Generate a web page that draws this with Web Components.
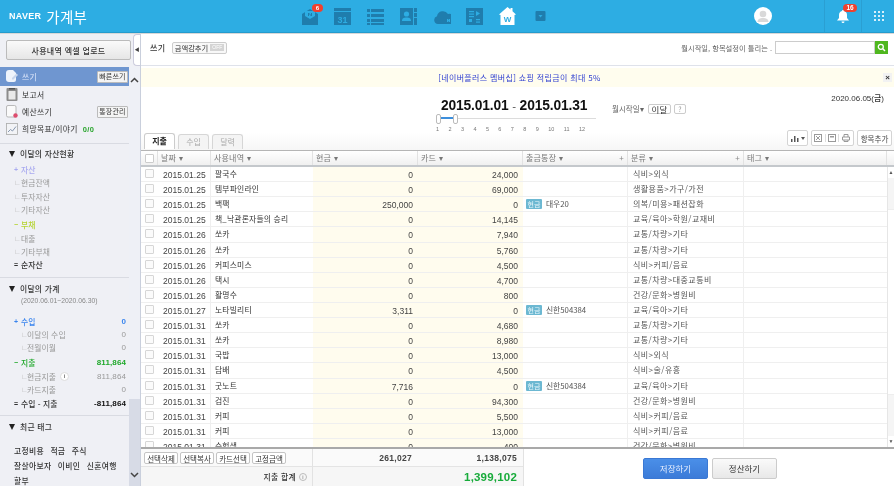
<!DOCTYPE html>
<html lang="ko">
<head>
<meta charset="utf-8">
<title>NAVER 가계부</title>
<style>
  html, body { margin: 0; height: 100%; overflow: hidden; background: #fff; }
  body {
    font-family: "Liberation Sans", "Noto Sans CJK KR", sans-serif;
    font-size: 9px;
    color: #444;
    filter: blur(.35px);
  }
</style>
</head>
<body>
<ledger-app></ledger-app>

<script>
const KR = `"Noto Sans CJK KR", "Liberation Sans", sans-serif`;

/**
 * Small helper, every element here renders once in connectedCallback
 */
class Base extends HTMLElement {
  constructor() {
    super();
    this.attachShadow({ mode: "open" });
  }
  connectedCallback() {
    this.shadowRoot.innerHTML = this.render();
  }
  attr(name, fallback = "") {
    return this.getAttribute(name) ?? fallback;
  }
}

/* ---------- top bar ---------- */
class TopIcon extends Base {
  render() {
    const c = "#1f7dad";
    const icons = {
      mail: `<path fill="${c}" d="M1 7l8-5 8 5v11H1z"/><path fill="#2dade3" d="M4 4h10v5l-5 3-5-3z"/><path fill="${c}" d="M7 6h1l2 2V6h1v3h-1L8 7v2H7z"/>`,
      cal: `<rect x="0" y="1" width="17" height="3" fill="${c}"/><rect x="0" y="5" width="17" height="13" fill="${c}"/><text x="8.5" y="16" font-size="9" font-weight="700" text-anchor="middle" fill="#2dade3" font-family="Liberation Sans">31</text>`,
      list: `<g fill="${c}"><rect x="0" y="2" width="3" height="3"/><rect x="4" y="2" width="13" height="3"/><rect x="0" y="7" width="3" height="3"/><rect x="4" y="7" width="13" height="3"/><rect x="0" y="12" width="3" height="3"/><rect x="4" y="12" width="13" height="3"/><rect x="0" y="16" width="3" height="2"/><rect x="4" y="16" width="13" height="2"/></g>`,
      contact: `<path fill="${c}" d="M0 1h13v17H0z"/><path fill="${c}" d="M14 1h3v4h-3zM14 6h3v4h-3zM14 11h3v7h-3z"/><circle cx="6.5" cy="7" r="2.6" fill="#2dade3"/><path fill="#2dade3" d="M2 14c0-3 2-3.500 4.500-3.500S11 11 11 14z"/>`,
      cloud: `<path fill="${c}" d="M4 17a4 4 0 0 1-1-7.800A6 6 0 0 1 14 7a5 5 0 0 1 3 10z" transform="translate(1 0)"/><path fill="#2dade3" d="M14 12h1l1 1.200V12h1v3h-1l-1-1.200V15h-1z"/>`,
      news: `<rect x="0" y="1" width="17" height="17" fill="${c}"/><g fill="#2dade3"><rect x="3" y="4" width="5" height="1.200"/><rect x="3" y="6.500" width="5" height="1.200"/><rect x="3" y="9" width="5" height="1.200"/><path d="M10 4l4 2.500-4 2.500z"/><rect x="3" y="12" width="3" height="3"/><rect x="10" y="12" width="4" height="1.200"/><rect x="10" y="14.500" width="4" height="1.200"/></g>`,
      home: `<path fill="#fff" d="M8.500 0l3 2.500V1h2v3.200L17 7.500 15.500 8v10h-14V8L0 7.500z"/><text x="8.500" y="15" font-size="8" font-weight="700" text-anchor="middle" fill="#2dade3" font-family="Liberation Sans">W</text>`,
      more: `<rect x="3.500" y="4" width="10" height="10" rx="1" fill="${c}"/><path fill="#2dade3" d="M6.500 8h4l-2 2.500z"/>`
    };
    return `<style>
      :host { display: block; flex: none; width: 18px; height: 19px; position: relative; }
      svg { display: block; }
      b {
        position: absolute; left: 11px; top: -3px; width: 11px; height: 8px; border-radius: 4px;
        background: #f0402f; color: #fff; font: 700 6px/8px "Liberation Sans", sans-serif; text-align: center;
      }
    </style>
    <svg width="18" height="19" viewBox="0 0 18 19">${icons[this.attr("name")]}</svg>
    ${this.hasAttribute("badge") ? `<b>${this.attr("badge")}</b>` : ""}`;
  }
}

class TopBar extends Base {
  render() {
    return `<style>
      :host {
        display: flex; align-items: center; height: 32px; background: #2dade3;
        border-bottom: 1px solid #259bcd; box-shadow: 0 1px 0 #d8d8d8; color: #fff; position: relative; z-index: 2;
      }
      .logo { width: 301px; flex: none; box-sizing: border-box; padding-left: 9px; display: flex; align-items: center; gap: 5px; }
      .naver { font: 900 9px "Liberation Sans", sans-serif; letter-spacing: .3px; }
      .title { font: 400 14.500px ${KR}; letter-spacing: .3px; }
      .apps { display: flex; gap: 15px; flex: none; }
      .avatar {
        width: 18px; height: 18px; flex: none; border-radius: 50%; background: #fff; margin-left: 204px; position: relative; overflow: hidden;
      }
      .avatar svg { display: block; }
      .cell { height: 32px; flex: none; border-left: 1px solid #2a9fd2; display: flex; align-items: center; justify-content: center; position: relative; box-sizing: border-box; }
      .bell { width: 37px; margin-left: 52px; }
      .bell i {
        position: absolute; left: 18px; top: 4px; width: 14px; height: 8px; border-radius: 4px; background: #f0402f;
        font: 700 6.500px/8px "Liberation Sans", sans-serif; text-align: center; font-style: normal;
      }
      .grid { width: 33px; }
      .dots { display: grid; grid-template-columns: repeat(3, 2.500px); gap: 1.500px; margin-left: 2px; }
      .dots u { height: 2.500px; background: #d8f0fb; }
    </style>
    <div class="logo"><span class="naver">NAVER</span><span class="title">가계부</span></div>
    <div class="apps">
      <top-icon name="mail" badge="6"></top-icon>
      <top-icon name="cal"></top-icon>
      <top-icon name="list"></top-icon>
      <top-icon name="contact"></top-icon>
      <top-icon name="cloud"></top-icon>
      <top-icon name="news"></top-icon>
      <top-icon name="home"></top-icon>
      <top-icon name="more"></top-icon>
    </div>
    <div class="avatar"><svg width="18" height="18" viewBox="0 0 18 18"><circle cx="9" cy="7" r="3.300" fill="#d9d9d9"/><path fill="#d9d9d9" d="M3.500 15c0-3 2.500-4 5.500-4s5.500 1 5.500 4z"/></svg></div>
    <div class="cell bell">
      <svg width="12" height="13" viewBox="0 0 12 13"><path fill="#fff" d="M6 0c.6 0 1 .4 1 1 2 .5 3 2 3 4v3l2 2.500H0L2 8V5c0-2 1-3.500 3-4 0-.6.4-1 1-1zM4.500 11.500h3a1.500 1.500 0 0 1-3 0z"/></svg>
      <i>16</i>
    </div>
    <div class="cell grid"><div class="dots">${"<u></u>".repeat(9)}</div></div>`;
  }
}

/* ---------- sidebar ---------- */
const NAV_ICONS = {
  write: `<path fill="#eef3fb" d="M0 3a3 3 0 0 1 3-3h4l3 3v7a2 2 0 0 1-2 2H3a3 3 0 0 1-3-3z"/><path fill="#c7d5ec" d="M6 8l4.500-4.500L12 5l-4.500 4.500H6z"/>`,
  report: `<rect x=".5" y="0" width="11" height="13" rx="1" fill="#8c8c8c"/><rect x="2.500" y="3" width="7" height="8.500" fill="#e9e9e9"/><rect x="3" y="0" width="6" height="1.500" fill="#555"/>`,
  budget: `<rect x=".5" y=".5" width="9.500" height="11.500" rx="1.500" fill="#fafafa" stroke="#aaa" stroke-width=".8"/><circle cx="9.500" cy="10.500" r="2.200" fill="#dd4d6e"/>`,
  goal: `<rect x=".5" y="1.500" width="11" height="11" fill="#f2f3f6" stroke="#aaa" stroke-width=".8"/><path d="M2 10l2.500-2.500 2 1.500L10 4.500" fill="none" stroke="#7c8da8" stroke-width=".9"/>`
};

class SideNav extends Base {
  render() {
    const active = this.hasAttribute("active");
    return `<style>
      :host {
        display: flex; flex: none; align-items: center; height: ${this.attr("h", "17")}px; padding: 0 1px 0 6px; gap: 4px;
        font: 400 7.800px ${KR}; letter-spacing: .3px; color: ${active ? "#dfe8fb" : "#333"};
        background: ${active ? "#6f96d0" : "transparent"};
      }
      svg { flex: none; }
      .txt { flex: 1; white-space: nowrap; }
      .tag {
        height: 10px; line-height: 9px; padding: 0 1.500px; border: 1px solid #bbb; border-radius: 1px; letter-spacing: .1px;
        font-size: 7px; color: #333; background: #f4f4f4; white-space: nowrap;
      }
      em { color: #2aa52d; font: 700 7.500px "Liberation Sans", sans-serif; margin-left: 5px; letter-spacing: .4px; font-style: normal; }
    </style>
    <svg width="12" height="13" viewBox="0 0 12 13">${NAV_ICONS[this.attr("icon")]}</svg>
    <span class="txt"><slot></slot>${this.hasAttribute("score") ? `<em>${this.attr("score")}</em>` : ""}</span>
    ${this.hasAttribute("tag") ? `<span class="tag">${this.attr("tag")}</span>` : ""}`;
  }
}

class SideTitle extends Base {
  render() {
    return `<style>
      :host {
        display: block; flex: none; height: 14px; padding-left: 9px;
        font: 500 7.800px/14px ${KR}; letter-spacing: .25px; color: #333; white-space: nowrap;
      }
      i { display: inline-block; width: 0; height: 0; border: 3.500px solid transparent; border-top: 6px solid #222; border-bottom: 0; margin-right: 5px; vertical-align: 0; }
    </style><i></i><slot></slot>`;
  }
}

class SideStat extends Base {
  render() {
    const kind = this.attr("kind", "sub");
    const deep = this.hasAttribute("deep");
    const mark = { plus: "+", minus: "−", eq: "=", sub: "∟" }[kind];
    const color = this.attr("color", kind === "sub" ? "#999" : "#333");
    const bold = kind !== "sub";
    return `<style>
      :host {
        display: flex; flex: none; align-items: center; height: 13.300px; padding: 0 3px 0 ${deep ? 21 : 14}px;
        font: ${bold ? 500 : 400} 7.800px ${KR}; letter-spacing: .1px; color: ${color}; white-space: nowrap;
      }
      .m { width: ${deep ? 6 : 7}px; flex: none; font: 700 7px "Liberation Sans", sans-serif; color: ${kind === "sub" ? "#bbb" : color}; }
      .l { flex: 1; display: flex; align-items: center; gap: 4px; }
      .v { font: ${bold ? 700 : 400} 8px "Liberation Sans", sans-serif; letter-spacing: .1px; color: ${kind === "eq" ? "#111" : color}; }
      .h { width: 9px; height: 9px; border-radius: 50%; border: 1px solid #ddd; box-sizing: border-box; font: 700 6px/7px "Liberation Sans", sans-serif; text-align: center; color: #777; background: #fff; }
    </style>
    <span class="m">${mark}</span>
    <span class="l"><slot></slot>${this.hasAttribute("help") ? `<span class="h">i</span>` : ""}</span>
    ${this.hasAttribute("value") ? `<span class="v">${this.attr("value")}</span>` : ""}`;
  }
}

class SideBar extends Base {
  render() {
    return `<style>
      :host { display: flex; flex-direction: column; width: 140px; flex: none; background: #eff0f5; position: relative; overflow: hidden; border-right: 1px solid #c9cfdc; box-sizing: content-box; }
      .upload { height: 34px; flex: none; box-sizing: border-box; padding: 7px 9px 0 6px; }
      .upload button {
        display: block; width: 125px; height: 20px; padding: 0; border: 1px solid #bbb; border-radius: 2px;
        background: linear-gradient(#fafafa, #e6e6e6); color: #333; font: 500 8px ${KR}; letter-spacing: .3px;
      }
      .fold {
        position: absolute; left: 133px; top: 1px; width: 7px; height: 32px; box-sizing: border-box; background: #fff;
        border: 1px solid #ccd; border-right: 0; border-radius: 4px 0 0 4px; font-size: 5px; line-height: 29px; color: #444; text-align: center;
      }
      .wrap { flex: 1; display: flex; min-height: 0; }
      .content { width: 129px; flex: none; display: flex; flex-direction: column; }
      .rail { width: 11px; flex: none; display: flex; flex-direction: column; background: #e9ecf4; justify-content: flex-start; }
      .rail div { height: 332px; flex: none; background: #eef0f6; text-align: center; }
      .rail span { flex: 1; background: #d7dbe6; display: flex; align-items: flex-end; justify-content: center; padding-bottom: 8px; }
      .rail svg { display: block; margin: 10px auto 0; }
      .rail span svg { margin: 0; }
      hr { border: 0; border-top: 1px solid #d9dbe2; margin: 0; flex: none; }
      .date { height: 10px; flex: none; padding-left: 21px; font: 400 6.800px/10px "Liberation Sans", sans-serif; color: #888; white-space: nowrap; }
      .tags { flex: none; padding: 10px 0 0 14px; font: 500 7.800px/14.600px ${KR}; letter-spacing: .3px; color: #333; word-spacing: 4px; white-space: nowrap; }
    </style>
    <div class="upload"><button>사용내역 엑셀 업로드</button></div>
    <div class="fold">◀</div>
    <div class="wrap">
      <div class="content">
        <side-nav active h="19" tag="빠른쓰기" icon="write">쓰기</side-nav>
        <side-nav h="17" icon="report">보고서</side-nav>
        <side-nav h="17" tag="통장관리" icon="budget">예산쓰기</side-nav>
        <side-nav h="17" score="0/0" icon="goal">희망목표/이야기</side-nav>
        <hr style="margin-top:6px">
        <side-title style="margin-top:3px">이달의 자산현황</side-title>
        <side-stat kind="plus" color="#a9aaf0" style="margin-top:2px">자산</side-stat>
        <side-stat>현금잔액</side-stat>
        <side-stat>투자자산</side-stat>
        <side-stat>기타자산</side-stat>
        <side-stat kind="minus" color="#b4d32f" style="margin-top:2px">부채</side-stat>
        <side-stat>대출</side-stat>
        <side-stat>기타부채</side-stat>
        <side-stat kind="eq">순자산</side-stat>
        <hr style="margin-top:6px">
        <side-title style="margin-top:4px">이달의 가계</side-title>
        <div class="date">(2020.06.01~2020.06.30)</div>
        <side-stat kind="plus" color="#3a85ee" value="0" style="margin-top:8px">수입</side-stat>
        <side-stat deep value="0">이달의 수입</side-stat>
        <side-stat deep value="0">전월이월</side-stat>
        <side-stat kind="minus" color="#1fa82a" value="811,864" style="margin-top:2px">지출</side-stat>
        <side-stat deep help value="811,864">현금지출</side-stat>
        <side-stat deep value="0">카드지출</side-stat>
        <side-stat kind="eq" value="-811,864" style="margin-top:1px">수입 - 지출</side-stat>
        <hr style="margin-top:5px">
        <side-title style="margin-top:4px">최근 태그</side-title>
        <div class="tags">고정비용 적금 주식<br>잘살아보자 이비인 신혼여행<br>할부</div>
      </div>
      <div class="rail">
        <div><svg width="9" height="6" viewBox="0 0 9 6"><path d="M1 5l3.500-3.500L8 5" fill="none" stroke="#444" stroke-width="1.500"/></svg></div>
        <span><svg width="9" height="6" viewBox="0 0 9 6"><path d="M1 1l3.500 3.500L8 1" fill="none" stroke="#444" stroke-width="1.500"/></svg></span>
      </div>
    </div>`;
  }
}

/* ---------- main top ---------- */
class ToolBar extends Base {
  render() {
    return `<style>
      :host {
        display: flex; flex: none; align-items: center; height: 33px; box-sizing: border-box; padding: 0 6px 3px 9px; border-bottom: 1px solid #dfe2ea;
        font: 400 7.300px ${KR}; color: #666;
      }
      b { font-weight: 500; color: #333; font-size: 8px; letter-spacing: .5px; margin-right: 6px; }
      .toggle {
        display: flex; align-items: center; gap: 2px; height: 12px; box-sizing: border-box; padding: 0 2px; border: 1px solid #ccc; border-radius: 2px;
        background: #f8f8f8; color: #333; font-size: 7.300px;
      }
      .toggle i { font: 400 5px/7px "Liberation Sans", sans-serif; background: #d4d4d4; color: #fff; padding: 0 2px; font-style: normal; }
      .hint { margin-left: auto; margin-right: 3px; }
      .search { width: 100px; height: 13px; box-sizing: border-box; border: 1px solid #ccc; background: #fff; }
      .go { width: 13px; height: 13px; background: #4fb71f; display: flex; align-items: center; justify-content: center; }
    </style>
    <b>쓰기</b>
    <span class="toggle">금액감추기<i>OFF</i></span>
    <span class="hint">월시작일, 항목설정이 틀리는 .</span>
    <div class="search"></div>
    <div class="go"><svg width="9" height="9" viewBox="0 0 9 9"><circle cx="3.800" cy="3.800" r="2.500" fill="none" stroke="#fff" stroke-width="1.300"/><path d="M5.800 5.800L8 8" stroke="#fff" stroke-width="1.500"/></svg></div>`;
  }
}

class NoticeBar extends Base {
  render() {
    return `<style>
      :host {
        display: block; flex: none; position: relative; margin-top: 2px; height: 19px; background: #fffdee; text-align: center;
        font: 400 8px/19px ${KR}; color: #2f3fd0; letter-spacing: .35px;
      }
      button { position: absolute; right: 2px; top: 5px; width: 9px; height: 9px; padding: 0; border: 0; background: #f2f2f2; color: #333; font: 700 8px/9px "Liberation Sans", sans-serif; }
      span { display: inline-block; transform: translateX(2px); }
    </style><span>[네이버플러스 멤버십] 쇼핑 적립금이 최대 5%</span><button>×</button>`;
  }
}

class MonthSlider extends Base {
  render() {
    const ticks = Array.from({ length: 12 }, (_, i) => `<span>${i + 1}</span>`).join("");
    return `<style>
      :host { display: block; position: relative; width: 160px; height: 16px; }
      .line { position: absolute; left: 2px; right: 0; top: 4px; height: 1px; background: #dcdcdc; }
      .on { position: absolute; left: 2px; top: 3px; width: 17px; height: 2px; background: #3d8fdc; }
      .grip { position: absolute; top: 0; width: 3px; height: 8px; border: 1px solid #bbb; border-radius: 2px; background: #fff; }
      .ticks { position: absolute; left: 0; top: 12px; width: 149px; display: flex; justify-content: space-between; font: 400 5.500px "Liberation Sans", sans-serif; color: #777; }
    </style>
    <div class="line"></div><div class="on"></div>
    <div class="grip" style="left:0"></div><div class="grip" style="left:17px"></div>
    <div class="ticks">${ticks}</div>`;
  }
}

class DateRange extends Base {
  render() {
    return `<style>
      :host {
        display: block; flex: none; position: relative; height: 45px; background: #fff;
        font: 400 7.500px ${KR}; color: #666;
      }
      .range { position: absolute; left: 300px; top: 10px; font: 700 13.800px/18px "Liberation Sans", sans-serif; color: #111; letter-spacing: -.15px; white-space: pre; }
      .range small { font-weight: 400; color: #555; }
      .today { position: absolute; right: 10px; top: 6px; font: 500 8px/12px "Liberation Sans", ${KR}; color: #333; }
      .start { position: absolute; left: 471px; top: 16px; display: flex; align-items: center; gap: 3px; }
      .chip { height: 10px; line-height: 9px; box-sizing: border-box; padding: 0 3px; border: 1px solid #ccc; border-radius: 2px; background: #fff; color: #333; font-size: 8.500px; }
      month-slider { position: absolute; left: 295px; top: 27px; }
    </style>
    <div class="range">2015.01.01 <small>-</small> 2015.01.31</div>
    <div class="today">2020.06.05(금)</div>
    <div class="start">월시작일▾ <span class="chip" style="margin-left:1px">이달</span><span class="chip" style="color:#999;font-size:7px">?</span></div>
    <month-slider></month-slider>`;
  }
}

class TabBar extends Base {
  render() {
    const g = "#999";
    return `<style>
      :host {
        display: flex; flex: none; align-items: flex-end; height: 18px; box-sizing: border-box; padding: 0 2px 1px 3px; background: linear-gradient(#fff, #f6f6f6);
        font: 400 8px ${KR}; position: relative; margin-bottom: -1px; z-index: 1;
      }
      .tab {
        width: 31px; height: 15px; box-sizing: border-box; margin-right: 3px; text-align: center; line-height: 14px; color: #aaa;
        border: 1px solid #d6d6d6; border-bottom: 0; border-radius: 3px 3px 0 0; background: #f4f4f4;
      }
      .tab.on { background: #fff; color: #222; font-weight: 700; border-color: #ccc; height: 16px; }
      .tools { margin-left: auto; display: flex; align-items: flex-start; gap: 3px; align-self: flex-start; margin-top: -2px; }
      .btn {
        height: 16px; box-sizing: border-box; border: 1px solid #d4d4d4; border-radius: 2px; background: #fff; display: flex; align-items: center; justify-content: center;
        color: #444; font-size: 7.500px;
      }
      .group { width: 43px; display: grid; grid-template-columns: repeat(3, 1fr); padding: 0; }
      .group span { display: flex; justify-content: center; border-right: 1px solid #ddd; }
      .group span:last-child { border: 0; }
    </style>
    <div class="tab on">지출</div><div class="tab">수입</div><div class="tab">달력</div>
    <div class="tools">
      <div class="btn" style="width:21px;gap:2px"><svg width="8" height="7" viewBox="0 0 8 7"><path fill="#555" d="M0 4h1.500v3H0zM3 1h1.500v6H3zM6 3h1.500v4H6z"/></svg><svg width="4" height="3" viewBox="0 0 4 3"><path fill="#555" d="M0 0h4L2 3z"/></svg></div>
      <div class="btn group">
        <span><svg width="8" height="8" viewBox="0 0 8 8"><rect x=".5" y=".5" width="7" height="7" fill="none" stroke="${g}"/><path d="M2 2l4 4M6 2L2 6" stroke="${g}"/></svg></span>
        <span><svg width="8" height="8" viewBox="0 0 8 8"><rect x=".5" y=".5" width="7" height="7" fill="none" stroke="${g}"/><rect x="2" y="2" width="4" height="1.500" fill="${g}"/></svg></span>
        <span><svg width="8" height="8" viewBox="0 0 8 8"><path d="M2 3V.5h4V3M.5 3h7v3h-7zM2 6v1.500h4V6" fill="none" stroke="${g}"/></svg></span>
      </div>
      <div class="btn" style="width:35px">항목추가</div>
    </div>`;
  }
}

/* ---------- ledger table ---------- */
const COLS = "17px 53px 102px 105px 105px 105px 116px 143px 7px";

class LedgerHead extends Base {
  render() {
    const cell = (t, plus) => `<div class="c"><span>${t} ▾</span>${plus ? "<i>+</i>" : ""}</div>`;
    return `<style>
      :host {
        display: grid; flex: none; grid-template-columns: ${COLS}; height: 18px; box-sizing: border-box;
        border-top: 2px solid #b5b5b5; border-bottom: 2px solid #c4c8cc; background: linear-gradient(#fff, #f0f0f0);
        font: 400 8px/12px ${KR}; color: #777; letter-spacing: .2px;
      }
      .c { display: flex; align-items: center; justify-content: space-between; padding: 0 3px 1px 3px; border-right: 1px solid #e2e2e2; white-space: nowrap; }
      .c i { font-style: normal; font-size: 8px; color: #888; }
      .box { padding: 0; justify-content: center; }
      .box u { width: 7px; height: 7px; border: 1px solid #ccc; background: #fff; border-radius: 1px; }
    </style>
    <div class="c box"><u></u></div>
    ${cell("날짜")}${cell("사용내역")}${cell("현금")}${cell("카드")}${cell("출금통장", true)}${cell("분류", true)}${cell("태그")}<div class="c" style="border:0"></div>`;
  }
}

class LedgerRow extends Base {
  render() {
    const bank = this.attr("bank");
    return `<style>
      :host {
        display: grid; grid-template-columns: 17px 53px 102px 105px 105px 105px 116px 143px; height: 15.120px; box-sizing: border-box;
        border-bottom: 1px solid #efefef; font: 400 8px/14px ${KR}; color: #333; white-space: nowrap;
      }
      div { overflow: hidden; }
      .box { display: flex; justify-content: center; padding-top: 2px; }
      .box u { width: 7px; height: 7px; border: 1px solid #d6d6d6; border-radius: 1px; background: #fbfbfb; }
      .date { font: 400 8.500px/16px "Liberation Sans", sans-serif; letter-spacing: .02px; padding-left: 5px; color: #444; border-right: 1px solid #efefef; }
      .name { padding-left: 4px; letter-spacing: .2px; color: #333; line-height: 13px; font-size: 7.800px; }
      .num { background: #fffcee; text-align: right; padding-right: 5px; font: 400 8.500px/16px "Liberation Sans", sans-serif; color: #444; }
      .bank { display: flex; align-items: center; gap: 4px; padding-left: 3px; border-right: 1px solid #efefef; font-size: 7.800px; color: #555; }
      .bank i { font-style: normal; background: #6cb8d2; color: #e8f6fb; font-size: 7px; line-height: 10px; height: 10px; padding: 0 1.500px; border-radius: 1px; }
      .cat { padding-left: 5px; letter-spacing: .45px; font-size: 8px; color: #555; border-right: 1px solid #efefef; line-height: 13px; }
    </style>
    <div class="box"><u></u></div>
    <div class="date">${this.attr("date")}</div>
    <div class="name">${this.attr("name")}</div>
    <div class="num">${this.attr("cash")}</div>
    <div class="num">${this.attr("card")}</div>
    <div class="bank">${bank ? `<i>현금</i><span>${bank}</span>` : ""}</div>
    <div class="cat">${this.attr("cat").replace(/>/g, "&gt;")}</div>
    <div></div>`;
  }
}

const ROWS = [
  ["2015.01.25", "팔국수", "0", "24,000", "", "식비>외식"],
  ["2015.01.25", "템부파인라인", "0", "69,000", "", "생활용품>가구/가전"],
  ["2015.01.25", "백팩", "250,000", "0", "대우20", "의복/미용>패션잡화"],
  ["2015.01.25", "책_낙관론자들의 승리", "0", "14,145", "", "교육/육아>학원/교재비"],
  ["2015.01.26", "쏘카", "0", "7,940", "", "교통/차량>기타"],
  ["2015.01.26", "쏘카", "0", "5,760", "", "교통/차량>기타"],
  ["2015.01.26", "커피스미스", "0", "4,500", "", "식비>커피/음료"],
  ["2015.01.26", "택시", "0", "4,700", "", "교통/차량>대중교통비"],
  ["2015.01.26", "활명수", "0", "800", "", "건강/문화>병원비"],
  ["2015.01.27", "노타빌리티", "3,311", "0", "신한504384", "교육/육아>기타"],
  ["2015.01.31", "쏘카", "0", "4,680", "", "교통/차량>기타"],
  ["2015.01.31", "쏘카", "0", "8,980", "", "교통/차량>기타"],
  ["2015.01.31", "국밥", "0", "13,000", "", "식비>외식"],
  ["2015.01.31", "담배", "0", "4,500", "", "식비>술/유흥"],
  ["2015.01.31", "굿노트", "7,716", "0", "신한504384", "교육/육아>기타"],
  ["2015.01.31", "검진", "0", "94,300", "", "건강/문화>병원비"],
  ["2015.01.31", "커피", "0", "5,500", "", "식비>커피/음료"],
  ["2015.01.31", "커피", "0", "13,000", "", "식비>커피/음료"],
  ["2015.01.31", "수험생", "0", "400", "", "건강/문화>병원비"]
];

class LedgerBody extends Base {
  render() {
    const rows = ROWS.map(([date, name, cash, card, bank, cat]) =>
      `<ledger-row date="${date}" name="${name}" cash="${cash}" card="${card}" bank="${bank}" cat="${cat}"></ledger-row>`).join("");
    return `<style>
      :host { display: block; flex: none; position: relative; height: 280px; overflow: hidden; }
      .bar { position: absolute; right: 0; top: 0; bottom: 0; width: 7px; background: #f5f5f5; border-left: 1px solid #e6e6e6; box-sizing: border-box; }
      .arrow { position: absolute; left: 0; right: 0; height: 11px; background: #fff; font: 400 5px/11px "Liberation Sans", sans-serif; text-align: center; color: #555; }
      .thumb { position: absolute; left: 0; right: 0; top: 42px; height: 184px; background: #fff; border-top: 1px solid #eee; border-bottom: 1px solid #eee; }
    </style>
    ${rows}
    <div class="bar"><div class="arrow" style="top:0">▲</div><div class="thumb"></div><div class="arrow" style="bottom:0">▼</div></div>`;
  }
}

class LedgerFoot extends Base {
  render() {
    return `<style>
      :host {
        display: grid; grid-template-columns: 172px 105px 105px 1fr; grid-template-rows: 17px 1fr; flex: 1; min-height: 0;
        border-top: 2px solid #a9a9a9; font: 400 8px ${KR}; color: #333; background: #fff;
      }
      .acts { display: flex; align-items: center; gap: 2px; padding-left: 3px; border-right: 1px solid #e2e2e2; background: #fafafa; }
      .acts span { width: 34px; text-align: center; height: 12px; line-height: 11px; box-sizing: border-box; border: 1px solid #c4c4c4; border-radius: 2px; background: #fff; font-size: 7.500px; white-space: nowrap; }
      .sum { display: flex; align-items: center; justify-content: flex-end; padding-right: 6px; font: 700 8.500px "Liberation Sans", sans-serif; color: #444; background: #fafafa; letter-spacing: .3px; }
      .label { background: #f6f6f6; border-top: 1px solid #e4e4e4; display: flex; align-items: center; justify-content: flex-end; gap: 3px; padding-right: 5px; border-right: 1px solid #e2e2e2; font-weight: 500; font-size: 7.800px; letter-spacing: .3px; }
      .label u { width: 8px; height: 8px; box-sizing: border-box; border: 1px solid #bbb; border-radius: 50%; font: 400 6px/6px "Liberation Sans", sans-serif; text-align: center; text-decoration: none; color: #777; }
      .total { grid-column: 2 / 4; background: #f6f6f6; border-top: 1px solid #e4e4e4; display: flex; align-items: center; justify-content: flex-end; padding-right: 6px; font: 700 11.500px "Liberation Sans", sans-serif; color: #17ab3a; letter-spacing: .2px; }
      .save { grid-column: 4; grid-row: 1 / 3; display: flex; justify-content: flex-start; align-items: flex-start; gap: 4px; padding: 9px 0 0 119px; border-left: 1px solid #e2e2e2; background: #fff; }
      .save span { width: 65px; height: 21px; box-sizing: border-box; border-radius: 2px; text-align: center; line-height: 19px; font-size: 8.500px; }
      .blue { background: linear-gradient(#4a8fe8, #3c7bd8); color: #e8f0ff; border: 1px solid #3a78d4; }
      .gray { background: linear-gradient(#fafafa, #e8e8e8); color: #333; border: 1px solid #ccc; }
    </style>
    <div class="acts"><span>선택삭제</span><span>선택복사</span><span>카드선택</span><span>고정금액</span></div>
    <div class="sum">261,027</div>
    <div class="sum">1,138,075</div>
    <div class="save"><span class="blue">저장하기</span><span class="gray">정산하기</span></div>
    <div class="label">지출 합계 <u>i</u></div>
    <div class="total">1,399,102</div>`;
  }
}

class LedgerApp extends Base {
  render() {
    return `<style>
      :host { display: flex; flex-direction: column; height: 486px; width: 894px; overflow: hidden; }
      .body { flex: 1; display: flex; min-height: 0; }
      main { flex: 1; min-width: 0; display: flex; flex-direction: column; background: #fff; }
    </style>
    <top-bar></top-bar>
    <div class="body">
      <side-bar></side-bar>
      <main>
        <tool-bar></tool-bar>
        <notice-bar></notice-bar>
        <date-range></date-range>
        <tab-bar></tab-bar>
        <ledger-head></ledger-head>
        <ledger-body></ledger-body>
        <ledger-foot></ledger-foot>
      </main>
    </div>`;
  }
}

customElements.define("top-icon", TopIcon);
customElements.define("top-bar", TopBar);
customElements.define("side-nav", SideNav);
customElements.define("side-title", SideTitle);
customElements.define("side-stat", SideStat);
customElements.define("side-bar", SideBar);
customElements.define("tool-bar", ToolBar);
customElements.define("notice-bar", NoticeBar);
customElements.define("month-slider", MonthSlider);
customElements.define("date-range", DateRange);
customElements.define("tab-bar", TabBar);
customElements.define("ledger-head", LedgerHead);
customElements.define("ledger-row", LedgerRow);
customElements.define("ledger-body", LedgerBody);
customElements.define("ledger-foot", LedgerFoot);
customElements.define("ledger-app", LedgerApp);
</script>
</body>
</html>
